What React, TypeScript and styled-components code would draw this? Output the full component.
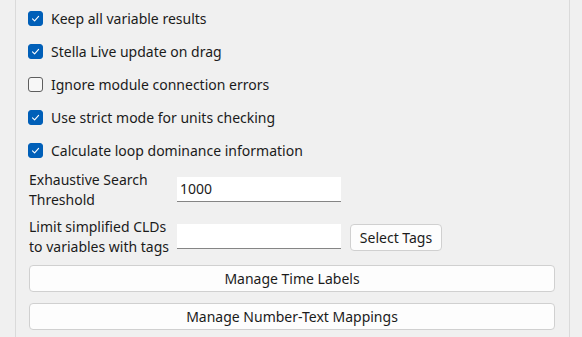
import React from "react";
import styled, { createGlobalStyle } from "styled-components";

const Global = createGlobalStyle`
  html, body { margin: 0; padding: 0; background: #f0f0f0; }
  body { font-family: "Noto Sans", "Open Sans", sans-serif; color: #1b1b1b; }
  * { box-sizing: border-box; }
`;

const Page = styled.div`
  width: 582px;
  height: 337px;
  overflow: hidden;
  padding-left: 15px;
  display: flex;
`;

const Panel = styled.div`
  width: 555px;
  height: 337px;
  border-left: 1px solid #dadada;
  border-right: 1px solid #dadada;
  padding: 8px 13px 0 12px;
  display: flex;
  flex-direction: column;
`;

const CheckList = styled.div`
  display: flex;
  flex-direction: column;
  gap: 13px;
`;

const CheckRow = styled.label`
  display: flex;
  align-items: center;
  height: 20px;
  gap: 8px;
  font-size: 14px;
`;

const Box = styled.span<{ $checked: boolean }>`
  width: 15px;
  height: 15px;
  border-radius: 3px;
  flex: none;
  display: flex;
  align-items: center;
  justify-content: center;
  background: ${(p) => (p.$checked ? "#005fb8" : "#f7f7f7")};
  border: 1px solid ${(p) => (p.$checked ? "#005fb8" : "#5e5e5e")};
`;

const FieldRow = styled.div<{ $top: number }>`
  display: grid;
  grid-template-columns: 139px 164px auto;
  align-items: center;
  column-gap: 9px;
  height: 40px;
  margin-top: ${(p) => p.$top}px;
  padding-left: 1px;
`;

const FieldLabel = styled.div`
  font-size: 14px;
  line-height: 20px;
  white-space: nowrap;
`;

const TextInput = styled.div`
  height: 25px;
  margin-top: -2px;
  background: #ffffff;
  border-bottom: 1px solid #858585;
  font-size: 14px;
  line-height: 24px;
  padding-left: 3px;
`;

const SmallButton = styled.button`
  height: 27px;
  width: 92px;
  background: #fdfdfd;
  border: 1px solid #d0d0d0;
  border-radius: 4px;
  font-family: inherit;
  font-size: 14px;
  color: #1b1b1b;
  padding: 0;
`;

const WideButton = styled.button<{ $top: number }>`
  height: 27px;
  width: 526px;
  margin-left: 1px;
  margin-top: ${(p) => p.$top}px;
  background: #fdfdfd;
  border: 1px solid #d0d0d0;
  border-radius: 4px;
  font-family: inherit;
  font-size: 14px;
  color: #1b1b1b;
  padding: 0;
`;

const Check = () => (
  <svg width="11" height="11" viewBox="0 0 11 11">
    <path d="M2.5 5.8 L4.6 7.8 L8.6 3.4" fill="none" stroke="#ffffff" strokeWidth="1.1" strokeLinecap="round" strokeLinejoin="round" />
  </svg>
);

const items: [string, boolean][] = [
  ["Keep all variable results", true],
  ["Stella Live update on drag", true],
  ["Ignore module connection errors", false],
  ["Use strict mode for units checking", true],
  ["Calculate loop dominance information", true],
];

export default function App() {
  return (
    <>
      <Global />
      <Page>
        <Panel>
          <CheckList>
            {items.map(([t, c]) => (
              <CheckRow key={t}>
                <Box $checked={c}>{c && <Check />}</Box>
                {t}
              </CheckRow>
            ))}
          </CheckList>
          <FieldRow $top={10}>
            <FieldLabel>
              Exhaustive Search
              <br />
              Threshold
            </FieldLabel>
            <TextInput>1000</TextInput>
          </FieldRow>
          <FieldRow $top={7}>
            <FieldLabel>
              Limit simplified CLDs
              <br />
              to variables with tags
            </FieldLabel>
            <TextInput />
            <SmallButton>Select Tags</SmallButton>
          </FieldRow>
          <WideButton $top={8}>Manage Time Labels</WideButton>
          <WideButton $top={11}>Manage Number-Text Mappings</WideButton>
        </Panel>
      </Page>
    </>
  );
}
